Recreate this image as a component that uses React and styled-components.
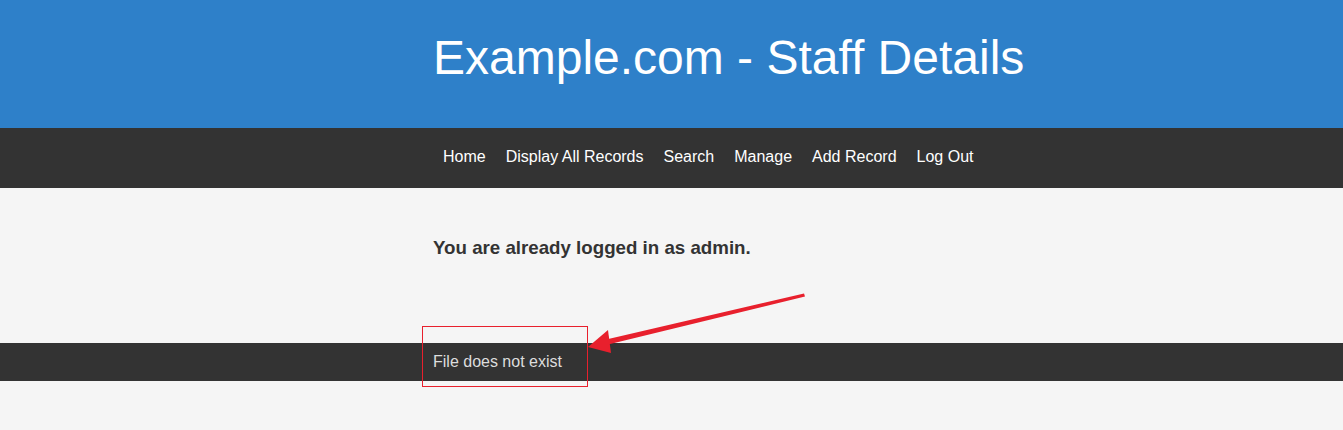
import React from "react";
import styled, { createGlobalStyle } from "styled-components";

const GlobalStyle = createGlobalStyle`
  html, body {
    margin: 0;
    padding: 0;
    background: #f5f5f5;
    font-family: "Liberation Sans", Arial, sans-serif;
  }
`;

const Page = styled.div`
  position: relative;
  width: 1343px;
  height: 430px;
  overflow: hidden;
  background: #f5f5f5;
`;

const Container = styled.div`
  width: 477px;
  margin: 0 auto;
  box-sizing: border-box;
`;

const Header = styled.header`
  background: #2e80c9;
  height: 128px;
  display: flex;
  align-items: center;
`;

const Title = styled.h1`
  margin: 0;
  padding-bottom: 13px;
  color: #ffffff;
  font-size: 48px;
  font-weight: 400;
  white-space: nowrap;
`;

const NavBar = styled.nav`
  background: #333333;
  height: 60px;
  display: flex;
  align-items: center;
`;

const NavList = styled.ul`
  list-style: none;
  margin: 0;
  padding: 0 0 2px;
  display: flex;
  white-space: nowrap;
`;

const NavLink = styled.a`
  display: block;
  padding: 0 10px;
  color: #ffffff;
  font-size: 16px;
  text-decoration: none;
`;

const Main = styled.main`
  height: 155px;
  padding-top: 49px;
  box-sizing: border-box;
`;

const Message = styled.h3`
  margin: 0;
  color: #333333;
  font-size: 18.72px;
  font-weight: 700;
  white-space: nowrap;
`;

const Footer = styled.footer`
  background: #333333;
  height: 38px;
  display: flex;
  align-items: center;
`;

const FooterText = styled.p`
  margin: 0;
  color: #dddddd;
  font-size: 16px;
`;

const Annotation = styled.svg`
  position: absolute;
  left: 0;
  top: 0;
  pointer-events: none;
`;

const links = ["Home", "Display All Records", "Search", "Manage", "Add Record", "Log Out"];

export default function App() {
  return (
    <Page>
      <GlobalStyle />
      <Header>
        <Container>
          <Title>Example.com - Staff Details</Title>
        </Container>
      </Header>
      <NavBar>
        <Container>
          <NavList>
            {links.map((l) => (
              <li key={l}>
                <NavLink href="#">{l}</NavLink>
              </li>
            ))}
          </NavList>
        </Container>
      </NavBar>
      <Main>
        <Container>
          <Message>You are already logged in as admin.</Message>
        </Container>
      </Main>
      <Footer>
        <Container>
          <FooterText>File does not exist</FooterText>
        </Container>
      </Footer>
      <Annotation width="1343" height="430" viewBox="0 0 1343 430">
        <rect x="422.5" y="326.5" width="165" height="60" fill="none" stroke="#e8202d" strokeWidth="1" />
        <polygon points="804,293.5 805,296.5 606,345 604,340" fill="#e8202d" />
        <polygon points="588,347 608,330 611,353" fill="#e8202d" />
      </Annotation>
    </Page>
  );
}
